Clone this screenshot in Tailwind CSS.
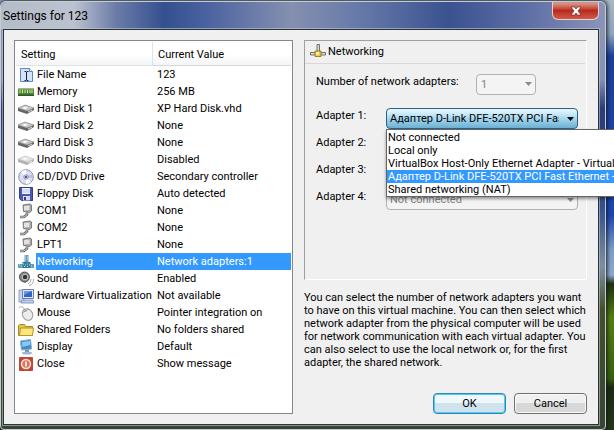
<!DOCTYPE html>
<html lang="en">
<head>
  <meta charset="UTF-8" />
  <meta name="viewport" content="width=device-width, initial-scale=1.0"/>
  <title>Settings for 123</title>
  <script src="https://cdn.jsdelivr.net/npm/@tailwindcss/browser@4"></script>
</head>
<body class="flex min-h-screen overflow-hidden bg-[linear-gradient(#a9b8c4_0%,#8fa4c0_8%,#1d3f9c_13%,#1c47b0_50%,#7d9cc8_58%,#8ea8cc_64%,#1c3010_66%,#55800f_74%,#38600c_88%,#1c2a10_90%,#26361a_100%)] text-[11px] leading-[13px] text-black font-[Roboto,'Noto_Sans',sans-serif]">
  <!-- Window frame -->
  <div class="mt-px mr-2 flex flex-1 flex-col rounded-t-md rounded-b-sm border border-[#c4ccd4] bg-[linear-gradient(#8d98b4_0%,#8791b8_18%,#2c3c78_25%,#34508c_48%,#7f8ea0_62%,#44502c_72%,#3a4530_100%)] pr-1.5 pb-1 pl-0.5 shadow-[0_0_4px_1px_#101820]">
    <header class="-mr-1.5 -ml-0.5 flex h-[27px] items-start justify-between rounded-t-md bg-[linear-gradient(90deg,#b4bcc8_0%,#bcc3d0_12%,#6c7ca8_19%,#34508f_27%,#4a62a0_34%,#8590b0_48%,#6478a8_60%,#3a5290_74%,#5a6ca4_86%,#8c94b8_100%)] pr-1.5 pl-0.5">
      <h1 class="pt-1.5 text-[12px] leading-[16px]">Settings for 123</h1>
      <button type="button" aria-label="Close window" class="flex h-[18px] w-[47px] items-center justify-center rounded-b-md border border-t-0 border-[#e8d0d0] bg-linear-to-b from-[#d99084] from-10% via-[#b8281c] via-50% to-[#cf5a48]">
        <svg class="h-2.5 w-3" viewBox="0 0 12 10"><path d="M1 1h3.500L6 3l1.500-2H11L8 5l3 4H7.500L6 7 4.500 9H1l3-4z" fill="#fff" stroke="#5a2020" stroke-width=".6"/></svg>
      </button>
    </header>

    <main class="flex flex-1 gap-[11px] border border-[#2a3338] bg-[#f0f0f0] py-[10px] pr-[11px] pl-[10px] outline outline-[#c0c8d0]/60">
      <!-- Setting list -->
      <section class="w-[279px] border border-[#828790] bg-white p-px">
        <table class="w-full table-fixed border-separate border-spacing-0 text-left">
          <thead>
            <tr class="h-6 bg-linear-to-b from-white from-50% to-[#f3f4f6]">
              <th class="w-[137px] border-r border-b border-[#dfe3e8] pt-0.5 pl-[5px] font-normal">Setting</th>
              <th class="border-b border-[#d5d9de] pt-0.5 pl-[5px] font-normal">Current Value</th>
            </tr>
          </thead>
          <tbody id="rows"></tbody>
        </table>
      </section>

      <div class="flex min-w-0 flex-1 flex-col">
        <section class="h-[240px] border border-t-[#a0a0a0] border-r-white border-b-white border-l-[#a0a0a0]">
          <h2 class="mr-px flex h-[23px] items-center gap-0.5 border-b border-[#d8d8d8] pb-0.5 pl-[5px]">
            <svg class="h-4 w-4" viewBox="0 0 16 16"><path d="M7 1.500h2.500V9H7z" fill="#d4dae0" stroke="#555" stroke-width=".8"/><path d="M.5 9.500h15v2.500H.5z" fill="#d4d8dc" stroke="#555" stroke-width=".8"/><path d="M5 8h6v5.500H5z" fill="#f0c840" stroke="#8a6a10" stroke-width=".8"/><path d="M6 9h3v2.500H6z" fill="#fff2a8"/></svg>
            Networking
          </h2>
          <div class="flex flex-col gap-1.5 pt-[10px] pl-[11px]">
            <div class="flex justify-between pr-[50px] pb-[7px]">
              <label for="count" class="pt-px">Number of network adapters:</label>
              <span class="relative">
                <select id="count" disabled class="h-[21px] w-[60px] appearance-none rounded-sm border border-[#adb2b5] bg-[#f4f4f4] pl-1 text-[#838383]"><option>1</option></select>
                <svg class="pointer-events-none absolute top-2 right-1 h-1 w-[7px]" viewBox="0 0 7 4"><path d="M0 0h7L3.500 4z" fill="#8c8c8c"/></svg>
              </span>
            </div>
            <div class="flex">
              <label for="adapter1" class="w-[70px] pt-px">Adapter 1:</label>
              <span class="relative">
                <select id="adapter1" aria-controls="choices" class="h-[21px] w-[192px] appearance-none overflow-hidden rounded-sm border border-[#2c628b] bg-linear-to-b from-[#e0f3fc] from-10% via-[#a5d8f0] via-50% to-[#6cb0d2] pr-[18px] pl-[3px]"><option>Адаптер D-Link DFE-520TX PCI Fast Ethernet</option></select>
                <svg class="pointer-events-none absolute top-[9px] right-1 h-1 w-[7px]" viewBox="0 0 7 4"><path d="M0 0h7L3.500 4z"/></svg>
                <ul id="choices" role="listbox" class="absolute top-[21px] left-0 z-10 w-[228px] overflow-hidden border border-r-0 border-[#646464] bg-white pt-px whitespace-nowrap shadow-[0_2px_3px_#0006]">
                  <li role="option" class="pl-px">Not connected</li>
                  <li role="option" class="pl-px">Local only</li>
                  <li role="option" class="pl-px">VirtualBox Host-Only Ethernet Adapter - Virtual</li>
                  <li role="option" aria-selected="true" class="bg-[#3399ff] pl-px text-white">Адаптер D-Link DFE-520TX PCI Fast Ethernet -</li>
                  <li role="option" class="pl-px">Shared networking (NAT)</li>
                </ul>
              </span>
            </div>
            <div class="flex">
              <label for="adapter2" class="w-[70px] pt-px">Adapter 2:</label>
              <select id="adapter2" disabled class="h-[21px] w-[192px] appearance-none rounded-sm border border-[#adb2b5] bg-[#f4f4f4] pl-[3px] text-[#838383]"><option>Not connected</option></select>
            </div>
            <div class="flex">
              <label for="adapter3" class="w-[70px] pt-px">Adapter 3:</label>
              <select id="adapter3" disabled class="h-[21px] w-[192px] appearance-none rounded-sm border border-[#adb2b5] bg-[#f4f4f4] pl-[3px] text-[#838383]"><option>Not connected</option></select>
            </div>
            <div class="flex">
              <label for="adapter4" class="w-[70px] pt-px">Adapter 4:</label>
              <span class="relative">
                <select id="adapter4" disabled class="h-[21px] w-[192px] appearance-none rounded-sm border border-[#adb2b5] bg-[#f4f4f4] pl-[3px] text-[#838383]"><option>Not connected</option></select>
                <svg class="pointer-events-none absolute top-[9px] right-1 h-1 w-[7px]" viewBox="0 0 7 4"><path d="M0 0h7L3.500 4z" fill="#8c8c8c"/></svg>
              </span>
            </div>
          </div>
        </section>

        <p class="pt-[11px]">You can select the number of network adapters you want<br>to have on this virtual machine. You can then select which<br>network adapter from the physical computer will be used<br>for network communication with each virtual adapter. You<br>can also select to use the local network or, for the first<br>adapter, the shared network.</p>

        <div class="mt-auto flex justify-end gap-2">
          <button type="button" class="h-[21px] w-[73px] rounded-sm border border-[#3c7fb1] bg-linear-to-b from-[#f0f8fb] from-50% to-[#cfe3ee] to-50% inset-ring inset-ring-[#48d0f5]">OK</button>
          <button type="button" class="h-[21px] w-[73px] rounded-sm border border-[#707070] bg-linear-to-b from-[#f0f0f0] from-50% to-[#d8d8d8] to-50% inset-ring inset-ring-[#fafafa]">Cancel</button>
        </div>
      </div>
    </main>
  </div>

  <script>
    const disk = '<path d="M0 7l7-3 9 3v2l-7 4-9-3z" fill="#666"/><path d="M0 7l7-3 9 3-7 3z" fill="#c9c9c9" stroke="#888" stroke-width=".5"/><path d="M4 7l3-1.300 3 1-3 1.300z" fill="#fff"/><path d="M10 11l4-2" stroke="#ddd"/>';
    const plug = '<path d="M5 2l7-1 1.500 1v6l-2 1.500-6-1z" fill="#a8a8a8" stroke="#666" stroke-width=".8"/><path d="M6 3l5.500-.5v4.500L6 7.500z" fill="#e2e2e2"/><path d="M9 9.500v2L6 14H2" fill="none" stroke="#666" stroke-width="2.600"/><path d="M9 9.500v2L6 14H2" fill="none" stroke="#c8c8c8"/>';
    const icons = {
      file: '<path d="M2.500 1.500h9l3 3v10h-12z" fill="#d4e5fa" stroke="#5b86c4"/><path d="M11.500 1.500v3h3" fill="#fff" stroke="#5b86c4"/><path d="M6.500 4.500h1.500l.5.500.5-.5h1.500M8.500 5v8M6.500 13.500H8l.5-.5.5.5h1.500" fill="none" stroke="#223"/>',
      memory: '<path d="M0 4h16v8H0z" fill="#4d8a36"/><path d="M0 4h16v1.500H0z" fill="#9bbc7c"/><path d="M2 6v3M4.500 6v3M7 6v3M9.500 6v3M12 6v3M14 6v3" stroke="#dce8b8"/><path d="M0 10.500h16V12H0z" fill="#2d5a20"/>',
      disk: disk,
      undo: '<g opacity=".5">' + disk + '</g>',
      cd: '<circle cx="8" cy="8" r="7.300" fill="#dcdff0" stroke="#8c8fb4"/><path d="M8 8L3 3a7 7 0 0 1 5-2zM8 8l5 5a7 7 0 0 1-5 2z" fill="#fff"/><path d="M8 8l6.500-3A7 7 0 0 1 15 9z" fill="#bcc0e4"/><circle cx="8" cy="8" r="2.300" fill="#c0c4e0" stroke="#777ba8" stroke-width=".6"/><circle cx="8" cy="8" r="1" fill="#333c70"/>',
      floppy: '<path d="M1.500 1.500h13v13h-11l-2-2z" fill="#4b57b4" stroke="#313c8c"/><path d="M4 2h8v6H4z" fill="#f4f4fa"/><path d="M4 4h8M4 6h8" stroke="#b0b4cc" stroke-width=".8"/><path d="M5 10h7v4.500H5z" fill="#d8d8e4"/><path d="M6 11h2v3H6z" fill="#313c8c"/>',
      plug: plug,
      network: '<path d="M6.500 1h4v7h-4z" fill="#5fa0b8"/><path d="M0 10h16v4H0z" fill="#5fa0b8"/><path d="M4.500 8h8v6h-8z" fill="#35789c"/><path d="M7 2h1M9 3h1M7 4h1M9 5h1M7 6h1M1 11h1M3 12h1M5 10h1M7 11h1M9 10h1M11 11h1M13 12h1M6 12.500h1M9 12.500h1" stroke="#c4e4ec"/>',
      sound: '<path d="M1 4l5-3 5 2v6l-4 3-5-3z" fill="#888"/><circle cx="6.500" cy="6" r="5" fill="#888" stroke="#444" stroke-width=".8"/><circle cx="7" cy="6" r="2.800" fill="#333" stroke="#ccc"/><path d="M10 13a5 5 0 0 0 3-5M11 15a7 7 0 0 0 4.500-7" fill="none" stroke="#aaa"/>',
      hardware: '<path d="M1 2h5v12H1z" fill="#c8d6ec" stroke="#7890bc" stroke-width=".8"/><path d="M4.500 1.500h11v9h-11z" fill="#e0e8f4" stroke="#6480b4"/><path d="M6 3h8v6H6z" fill="#3464c8"/><path d="M6 3h8L6 7z" fill="#6c98e8"/><path d="M4 12h11l1 3H3z" fill="#c4d0e4" stroke="#7088b4" stroke-width=".8"/>',
      mouse: '<ellipse cx="9.500" cy="9.500" rx="5" ry="6" transform="rotate(-30 9.500 9.500)" fill="#ededed" stroke="#999"/><path d="M4 8l7-4M6 4l2 3" fill="none" stroke="#999"/><path d="M6 4C5 1 2 1 1 3" fill="none" stroke="#aaa"/>',
      folder: '<path d="M.5 13.500v-10l1-1h5l1 2h7v9z" fill="#e8c440" stroke="#a8862c"/><path d="M1.500 13.500l1-7.500h13l-1 7.500z" fill="#fbe57c" stroke="#b8942c"/>',
      display: '<path d="M2.500 2l10-1.500 1 9.500-10 1z" fill="#3b8ad4" stroke="#88a8c8"/><path d="M4 3l8-1v4L4.500 8z" fill="#8cc8f4"/><path d="M7 11h4v2H7z" fill="#6890b8"/><ellipse cx="9" cy="14" rx="5" ry="1.500" fill="#a4b8d0"/>',
      close: '<path d="M1.500 1.500h13v13h-13z" fill="#c8452c" stroke="#b84c38"/><circle cx="8" cy="8" r="4.500" fill="#d87460" stroke="#fbe4dc" stroke-width="1.500"/><path d="M8 5.500v5" stroke="#fff" stroke-width="1.500"/>'
    };
    const settings = [
      ["file", "File Name", "123"],
      ["memory", "Memory", "256 MB"],
      ["disk", "Hard Disk 1", "XP Hard Disk.vhd"],
      ["disk", "Hard Disk 2", "None"],
      ["disk", "Hard Disk 3", "None"],
      ["undo", "Undo Disks", "Disabled"],
      ["cd", "CD/DVD Drive", "Secondary controller"],
      ["floppy", "Floppy Disk", "Auto detected"],
      ["plug", "COM1", "None"],
      ["plug", "COM2", "None"],
      ["plug", "LPT1", "None"],
      ["network", "Networking", "Network adapters:1"],
      ["sound", "Sound", "Enabled"],
      ["hardware", "Hardware Virtualization", "Not available"],
      ["mouse", "Mouse", "Pointer integration on"],
      ["folder", "Shared Folders", "No folders shared"],
      ["display", "Display", "Default"],
      ["close", "Close", "Show message"]
    ];
    document.getElementById("rows").innerHTML = settings.map(([icon, name, value]) => {
      const on = name === "Networking" ? "bg-[#3399ff] text-white" : "";
      return `<tr class="h-[17px] whitespace-nowrap">
        <td class="p-0"><div class="flex h-[17px] items-center"><svg class="ml-0.5 h-4 w-4 shrink-0" viewBox="0 0 16 16">${icons[icon]}</svg><span class="ml-0.5 flex-1 py-0.5 pl-px ${on}">${name}</span></div></td>
        <td class="p-0 pl-1 ${on}">${value}</td>
      </tr>`;
    }).join("");
  </script>
</body>
</html>
